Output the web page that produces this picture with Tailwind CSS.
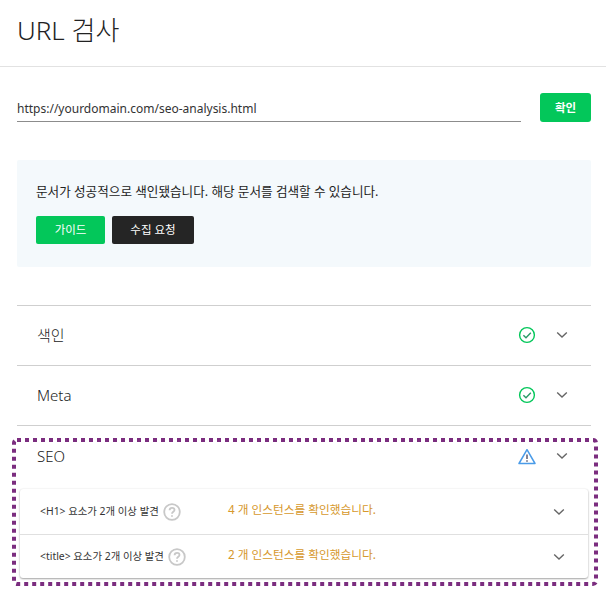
<!DOCTYPE html>
<html lang="ko">
<head>
    <meta charset="UTF-8">
    <title>URL 검사</title>
    <script src="https://cdn.jsdelivr.net/npm/@tailwindcss/browser@4"></script>
</head>
<body class="bg-white text-[#222] font-['Noto_Sans','Noto_Sans_CJK_KR',sans-serif]">
    <div class="relative w-[606px] h-[590px] overflow-hidden">
        <!-- header -->
        <div class="h-[67px] border-b border-[#e2e2e2] px-[17px] pt-[11px]">
            <h1 class="text-[26px] leading-[38px] font-light">URL 검사</h1>
        </div>

        <!-- url input -->
        <div class="flex items-end pl-[17px] pr-[15px] pt-[25px]">
            <div class="w-[504px] h-[30px] border-b border-[#8c8c8c] text-[12px] leading-[33px] text-[#333]">https://yourdomain.com/seo-analysis.html</div>
            <button class="ml-[19px] w-[51px] h-[29px] rounded-[3px] bg-[#03c75a] text-white text-[11.5px] font-bold">확인</button>
        </div>

        <!-- status panel -->
        <div class="ml-[17px] mr-[15px] mt-[38px] h-[107px] rounded-[2px] bg-[#f4f9fc] px-[19px] pt-[23px]">
            <p class="text-[12.6px] leading-[18px] text-[#222]">문서가 성공적으로 색인됐습니다. 해당 문서를 검색할 수 있습니다.</p>
            <div class="flex gap-[7px] mt-[15px]">
                <button class="w-[69px] h-[28px] rounded-[2px] bg-[#03c75a] text-white text-[11.5px]">가이드</button>
                <button class="w-[82px] h-[28px] rounded-[2px] bg-[#252525] text-white text-[11.5px]">수집 요청</button>
            </div>
        </div>

        <!-- accordion -->
        <div class="ml-[17px] mr-[15px] mt-[38px] border-t border-[#cfcfcf]">
            <div class="flex items-center h-[60px] border-b border-[#cfcfcf] pl-[20px] pr-[23px] pb-[1px]">
                <span class="flex-1 text-[15px] font-light">색인</span>
                <svg class="w-[18px] h-[18px] text-[#03c75a]" viewBox="0 0 18 18" fill="none" stroke="currentColor" stroke-width="1.4"><circle cx="9" cy="9" r="7.4"/><path d="M5.4 9.2l2.6 2.6 4.8-5" stroke="#2a9a68"/></svg>
                <svg class="ml-[20px] w-[12px] h-[8px] text-[#666]" viewBox="0 0 12 8" fill="none" stroke="currentColor" stroke-width="1.4"><path d="M1.2 1.5L6 6l4.8-4.5"/></svg>
            </div>
            <div class="flex items-center h-[60px] border-b border-[#cfcfcf] pl-[20px] pr-[23px] pb-[1px]">
                <span class="flex-1 text-[15px] font-light">Meta</span>
                <svg class="w-[18px] h-[18px] text-[#03c75a]" viewBox="0 0 18 18" fill="none" stroke="currentColor" stroke-width="1.4"><circle cx="9" cy="9" r="7.4"/><path d="M5.4 9.2l2.6 2.6 4.8-5" stroke="#2a9a68"/></svg>
                <svg class="ml-[20px] w-[12px] h-[8px] text-[#666]" viewBox="0 0 12 8" fill="none" stroke="currentColor" stroke-width="1.4"><path d="M1.2 1.5L6 6l4.8-4.5"/></svg>
            </div>
            <div class="flex items-center h-[60px] pl-[20px] pr-[23px]">
                <span class="flex-1 text-[15px] font-light">SEO</span>
                <svg class="w-[18px] h-[17px] text-[#4a9be8]" viewBox="0 0 18 16" fill="none" stroke="currentColor" stroke-width="1.5" stroke-linejoin="round"><path d="M9 1.2L1 15h16z"/><path d="M9 6v4.6" stroke="#5a5a70"/><path d="M9 11.8v1.4" stroke="#5a5a70"/></svg>
                <svg class="ml-[20px] w-[12px] h-[8px] text-[#666]" viewBox="0 0 12 8" fill="none" stroke="currentColor" stroke-width="1.4"><path d="M1.2 1.5L6 6l4.8-4.5"/></svg>
            </div>
        </div>

        <!-- seo issues -->
        <div class="ml-[20px] mr-[18px] mt-[3px] h-[89px] rounded-[3px] bg-white shadow-[0_1px_2px_rgba(0,0,0,0.35),0_0_2px_rgba(0,0,0,0.08)]">
            <div class="flex items-center h-[46px] border-b border-[#e0e0e0] pl-[20px] pr-[23px]">
                <span class="flex items-center w-[188px]">
                    <span class="text-[10.4px] text-[#333]">&lt;H1&gt; 요소가 2개 이상 발견</span>
                    <svg class="ml-[4px] w-[18px] h-[18px] text-[#c8c8c8]" viewBox="0 0 18 18" fill="none" stroke="currentColor" stroke-width="1.8"><circle cx="9" cy="9" r="7.8"/><path d="M6.6 7.2c0-1.5 1.1-2.4 2.5-2.4s2.4.9 2.4 2.1c0 1.9-2.5 1.9-2.5 3.9"/><path d="M9 12.2v1.5"/></svg>
                </span>
                <span class="flex-1 text-[11.7px] text-[#d6982c] mt-[-4px]">4 개 인스턴스를 확인했습니다.</span>
                <svg class="w-[12px] h-[8px] text-[#666]" viewBox="0 0 12 8" fill="none" stroke="currentColor" stroke-width="1.4"><path d="M1.2 1.5L6 6l4.8-4.5"/></svg>
            </div>
            <div class="flex items-center h-[43px] pl-[20px] pr-[23px]">
                <span class="flex items-center w-[188px]">
                    <span class="text-[10.4px] text-[#333]">&lt;title&gt; 요소가 2개 이상 발견</span>
                    <svg class="ml-[4px] w-[18px] h-[18px] text-[#c8c8c8]" viewBox="0 0 18 18" fill="none" stroke="currentColor" stroke-width="1.8"><circle cx="9" cy="9" r="7.8"/><path d="M6.6 7.2c0-1.5 1.1-2.4 2.5-2.4s2.4.9 2.4 2.1c0 1.9-2.5 1.9-2.5 3.9"/><path d="M9 12.2v1.5"/></svg>
                </span>
                <span class="flex-1 text-[11.7px] text-[#d6982c] mt-[-3px]">2 개 인스턴스를 확인했습니다.</span>
                <svg class="w-[12px] h-[8px] text-[#666]" viewBox="0 0 12 8" fill="none" stroke="currentColor" stroke-width="1.4"><path d="M1.2 1.5L6 6l4.8-4.5"/></svg>
            </div>
        </div>

        <!-- dotted highlight drawn over the seo section -->
        <svg class="absolute left-[10px] top-[436px] pointer-events-none" width="590" height="152" fill="none">
            <rect x="4" y="4" width="582" height="144" rx="3" stroke="#7b2d7f" stroke-width="4" stroke-dasharray="4 4"/>
        </svg>
    </div>
</body>
</html>
